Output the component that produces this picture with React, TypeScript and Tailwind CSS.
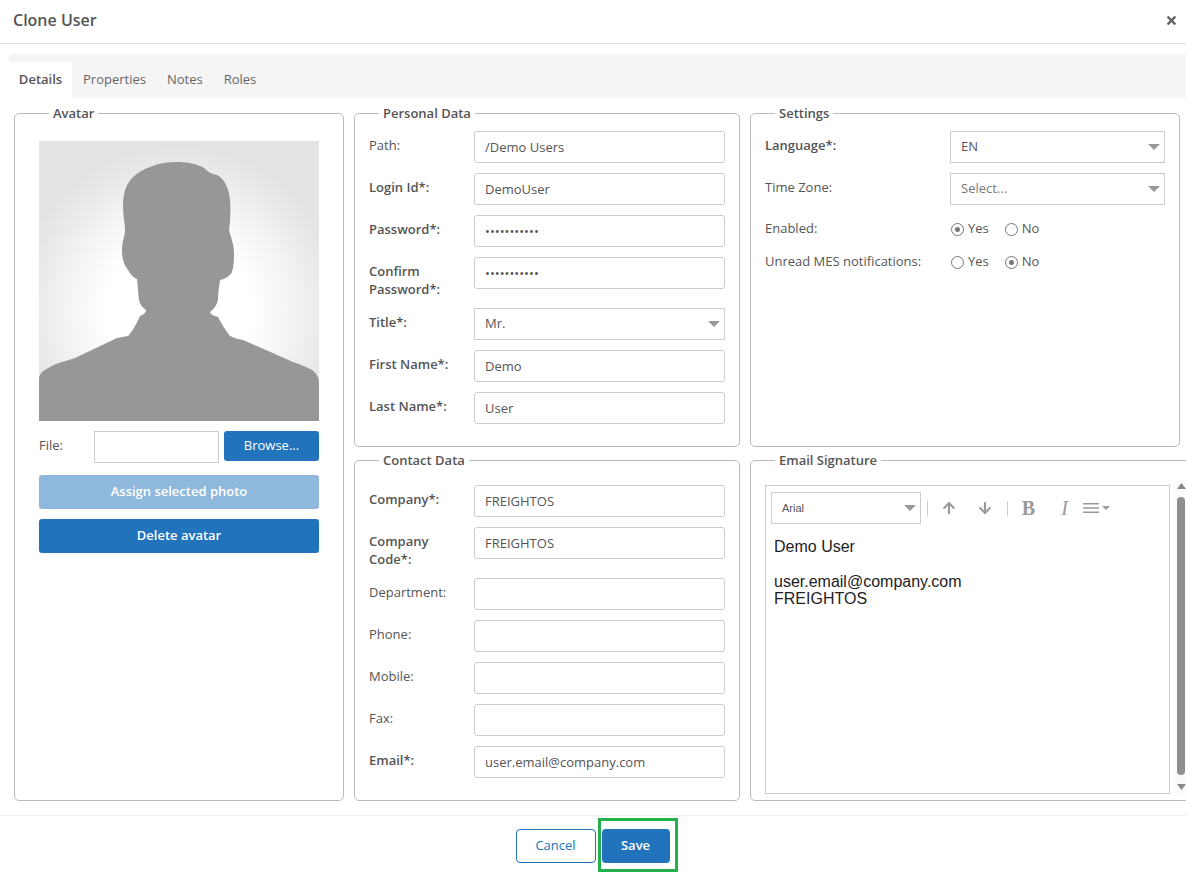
import React from "react";
import { FaArrowUp, FaArrowDown, FaTimes } from "react-icons/fa";

const inputClass =
  "w-[251px] h-[32px] border border-[#ccc] rounded-[3px] px-[10px] text-[13px] text-[#555] bg-white outline-none";

const Caret = () => (
  <svg width="12" height="6" viewBox="0 0 12 6" className="shrink-0">
    <path d="M0 0h12L6 6z" fill="#999" />
  </svg>
);

const Section: React.FC<{ title: string; className?: string; children: React.ReactNode }> = ({
  title,
  className = "",
  children,
}) => (
  <fieldset className={`border border-[#bbb] rounded-[5px] min-w-0 ${className}`}>
    <legend className="ml-[10px] px-[4px] text-[13px] leading-[18px] font-semibold text-[#555]">{title}</legend>
    {children}
  </fieldset>
);

const Row: React.FC<{ label: string; required?: boolean; children: React.ReactNode }> = ({
  label,
  required,
  children,
}) => (
  <div className="flex mb-[10px]">
    <label
      className={`w-[105px] shrink-0 mt-[5px] pr-[10px] leading-[18px] text-[13px] text-[#555] ${
        required ? "font-semibold" : ""
      }`}
    >
      {label}
    </label>
    {children}
  </div>
);

const TextRow: React.FC<{ label: string; required?: boolean; value?: string; password?: boolean }> = ({
  label,
  required,
  value = "",
  password,
}) => (
  <Row label={label} required={required}>
    <input type={password ? "password" : "text"} readOnly value={value} className={inputClass} />
  </Row>
);

const SelectBox: React.FC<{ value: string; className: string; textClass?: string }> = ({
  value,
  className,
  textClass = "text-[13px] text-[#555]",
}) => (
  <div className={`flex items-center justify-between border border-[#ccc] bg-white pl-[10px] pr-[4px] ${className}`}>
    <span className={textClass}>{value}</span>
    <Caret />
  </div>
);

const Radio: React.FC<{ checked?: boolean; label: string }> = ({ checked, label }) => (
  <span className="flex items-center gap-[4px] text-[13px] text-[#555]">
    <span className="w-[13px] h-[13px] rounded-full border-[1.5px] border-[#777] flex items-center justify-center">
      {checked && <span className="w-[5px] h-[5px] rounded-full bg-[#777]" />}
    </span>
    {label}
  </span>
);

const RadioRow: React.FC<{ label: string; yes: boolean; className: string }> = ({ label, yes, className }) => (
  <div className={`flex items-center h-[18px] text-[13px] text-[#555] ${className}`}>
    <span className="w-[186px] shrink-0">{label}</span>
    <span className="flex gap-[16px]">
      <Radio checked={yes} label="Yes" />
      <Radio checked={!yes} label="No" />
    </span>
  </div>
);

const Silhouette = () => (
  <svg width="280" height="280" viewBox="0 0 280 280" className="block">
    <defs>
      <radialGradient id="glow" cx="140" cy="170" r="165" gradientUnits="userSpaceOnUse">
        <stop offset="0.45" stopColor="#ffffff" />
        <stop offset="1" stopColor="#e3e3e3" />
      </radialGradient>
    </defs>
    <rect width="280" height="280" fill="url(#glow)" />
    <path
      fill="#979797"
      d="M138 21C120 21 104 27 94 36C86 44 84 54 84 66C84 74 86 82 86 89C86 95 83 100 83 109C83 118 85 124 89 129C92 134 95 137 98 138C99 146 99 152 100 159C101 164 104 167 107 169C107 172 104 174 101 175C98 181 94 190 89 195C85 196 82 196 78 197L36 217C25 221 17 222 11 226C5 229 1 232 0 237V280H280V239C278 234 277 232 273 229C268 226 262 224 254 221L204 199C199 198 195 197 191 195C187 190 182 182 179 176C176 175 172 174 171 171C175 168 178 164 179 159C179 152 180 146 181 139C186 138 191 135 193 131C195 125 195 118 195 112C195 104 192 96 190 89C191 82 192 72 191 59C190 48 186 38 178 34C172 33 168 30 165 27C158 23 148 21 138 21Z"
    />
  </svg>
);

export default function App() {
  return (
    <div className="relative w-[1186px] h-[874px] overflow-hidden bg-white text-[13px] text-[#555] font-['Open_Sans',sans-serif]">
      <div className="h-[44px] border-b border-[#ddd] flex items-center justify-between pl-[13px] pr-[8px]">
        <h1 className="text-[16px] font-semibold text-[#555] mt-[-3px]">Clone User</h1>
        <FaTimes className="text-[#666] mt-[-3px]" size={13} />
      </div>

      <div className="ml-[9px] mt-[10px] h-[44px] bg-[#f5f5f5] flex items-end">
        <span className="h-[36px] w-[63px] bg-white flex items-center justify-center font-semibold">Details</span>
        <span className="h-[36px] flex items-center ml-[11px] text-[#666]">Properties</span>
        <span className="h-[36px] flex items-center ml-[21px] text-[#666]">Notes</span>
        <span className="h-[36px] flex items-center ml-[21px] text-[#666]">Roles</span>
      </div>

      <div className="grid grid-cols-[330px_386px_430px] grid-rows-[343px_350px] gap-x-[10px] gap-y-[4px] ml-[14px] mt-[6px]">
        <Section title="Avatar" className="row-span-2 px-[24px] pt-[19px]">
          <Silhouette />
          <div className="flex mt-[10px]">
            <span className="w-[55px] mt-[5px] leading-[18px]">File:</span>
            <div className="w-[125px] h-[32px] border border-[#ccc] bg-white" />
            <button className="ml-[5px] w-[95px] h-[30px] rounded-[3px] bg-[#2173bc] text-white text-[13px]">
              Browse...
            </button>
          </div>
          <button className="block mt-[12px] w-[280px] h-[34px] rounded-[3px] bg-[#8fb8dd] text-white text-[13px] font-semibold">
            Assign selected photo
          </button>
          <button className="block mt-[10px] w-[280px] h-[34px] rounded-[3px] bg-[#2173bc] text-white text-[13px] font-semibold">
            Delete avatar
          </button>
        </Section>

        <Section title="Personal Data" className="px-[14px] pt-[9px]">
          <TextRow label="Path:" value="/Demo Users" />
          <TextRow label="Login Id*:" required value="DemoUser" />
          <TextRow label="Password*:" required value="12345678901" password />
          <TextRow label="Confirm Password*:" required value="12345678901" password />
          <Row label="Title*:" required>
            <SelectBox value="Mr." className="w-[251px] h-[32px]" />
          </Row>
          <TextRow label="First Name*:" required value="Demo" />
          <TextRow label="Last Name*:" required value="User" />
        </Section>

        <Section title="Settings" className="px-[14px] pt-[9px]">
          <div className="flex mb-[10px]">
            <label className="w-[185px] mt-[5px] leading-[18px] font-semibold">Language*:</label>
            <SelectBox value="EN" className="w-[215px] h-[32px]" />
          </div>
          <div className="flex mb-[10px]">
            <label className="w-[185px] mt-[5px] leading-[18px]">Time Zone:</label>
            <SelectBox value="Select..." className="w-[215px] h-[32px]" textClass="text-[13px] text-[#777]" />
          </div>
          <RadioRow label="Enabled:" yes className="mt-[15px]" />
          <RadioRow label="Unread MES notifications:" yes={false} className="mt-[15px]" />
        </Section>

        <Section title="Contact Data" className="px-[14px] pt-[9px]">
          <div className="mt-[7px]" />
          <TextRow label="Company*:" required value="FREIGHTOS" />
          <TextRow label="Company Code*:" required value="FREIGHTOS" />
          <TextRow label="Department:" />
          <TextRow label="Phone:" />
          <TextRow label="Mobile:" />
          <TextRow label="Fax:" />
          <TextRow label="Email*:" required value="user.email@company.com" />
        </Section>

        <Section title="Email Signature" className="w-[460px] pl-[14px] pt-[16px]">
          <div className="w-[405px] h-[309px] border border-[#ccc] px-[5px] pt-[6px] font-['Liberation_Sans',sans-serif]">
            <div className="flex items-center h-[32px] text-[#999]">
              <SelectBox value="Arial" className="w-[150px] h-[32px]" textClass="text-[11px] text-[#555]" />
              <span className="ml-[6px] w-px h-[15px] bg-[#ccc]" />
              <span className="w-[42px] flex justify-center"><FaArrowUp size={14} /></span>
              <span className="w-[30px] flex justify-center"><FaArrowDown size={14} /></span>
              <span className="ml-[7px] w-px h-[15px] bg-[#ccc]" />
              <span className="w-[41px] text-center text-[20px] leading-none font-bold font-['Liberation_Serif',serif]">B</span>
              <span className="w-[31px] text-center text-[20px] leading-none italic font-['Liberation_Serif',serif]">I</span>
              <svg width="30" height="10" viewBox="0 0 30 10" className="ml-[3px]">
                <path d="M0 0.75h16M0 5h16M0 9.25h16" stroke="#999" strokeWidth="1.5" />
                <path d="M19 3h8l-4 4z" fill="#999" />
              </svg>
            </div>
            <div className="mt-[14px] ml-[3px] text-[16px] leading-[17px] text-[#222]">
              <p>Demo User</p>
              <p className="mt-[18px]">user.email@company.com</p>
              <p>FREIGHTOS</p>
            </div>
          </div>
        </Section>
      </div>

      {/* editor scrollbar, sits over the clipped fieldset */}
      <div className="absolute right-0 top-[481px] w-[10px] h-[315px] bg-[#fafafa] flex flex-col items-center">
        <svg width="9" height="6" viewBox="0 0 9 6" className="mt-[2px]"><path d="M0 6h9L4.5 0z" fill="#888" /></svg>
        <div className="mt-[8px] w-[8px] h-[278px] rounded-t-[4px] rounded-b-[4px] bg-[#8f8f8f]" />
        <svg width="9" height="6" viewBox="0 0 9 6" className="mt-[9px]"><path d="M0 0h9L4.5 6z" fill="#888" /></svg>
      </div>

      <div className="mt-[14px] border-t border-[#eee] flex justify-center items-start pt-[13px] pl-[7px]">
        <button className="w-[80px] h-[34px] rounded-[4px] border border-[#2173bc] text-[#2173bc] text-[13px] bg-white">
          Cancel
        </button>
        <div className="ml-[2px] mt-[-11px] border-[3px] border-[#22b14c] pl-[1px] pr-[5px] pt-[8px] pb-[6px]">
          <button className="block w-[68px] h-[34px] rounded-[4px] bg-[#2173bc] text-white text-[13px] font-semibold">
            Save
          </button>
        </div>
      </div>
    </div>
  );
}
